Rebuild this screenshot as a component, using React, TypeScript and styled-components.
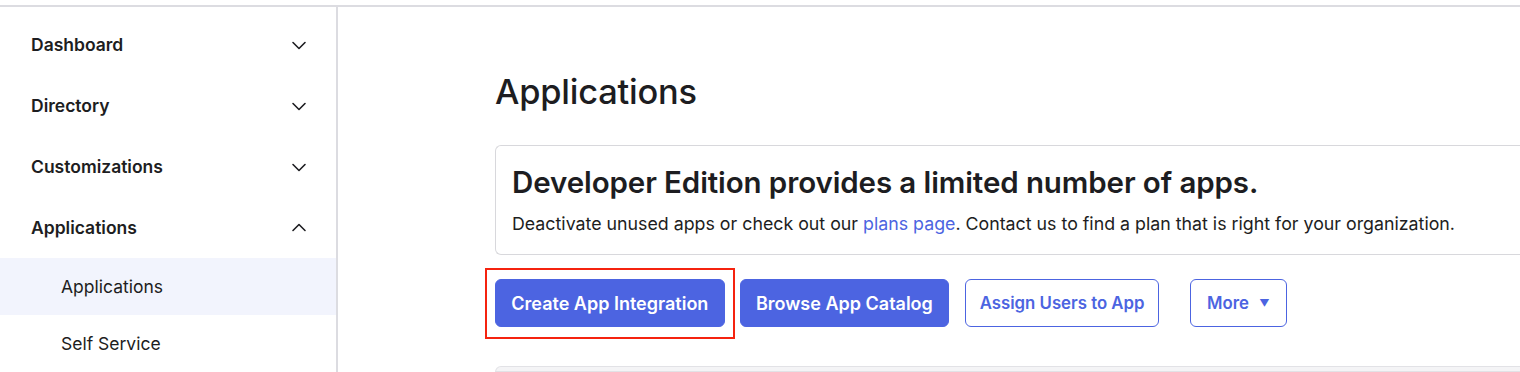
import styled, { createGlobalStyle } from 'styled-components';

const GlobalStyle = createGlobalStyle`
  html, body {
    margin: 0;
    padding: 0;
    background: #ffffff;
  }
  body {
    font-family: Inter, "Noto Sans", "Liberation Sans", sans-serif;
    color: #1d1d21;
    -webkit-font-smoothing: antialiased;
  }
`;

type NavSection = {
  label: string;
  open: boolean;
};

const sections: NavSection[] = [
  { label: 'Dashboard', open: false },
  { label: 'Directory', open: false },
  { label: 'Customizations', open: false },
  { label: 'Applications', open: true },
];

const subItems = [
  { label: 'Applications', active: true },
  { label: 'Self Service', active: false },
];

const Chevron = ({ up }: { up: boolean }) => (
  <svg width="16" height="16" viewBox="0 0 16 16" fill="none">
    <path
      d={up ? 'M2 10.5 L8 4.5 L14 10.5' : 'M2 5.5 L8 11.5 L14 5.5'}
      stroke="#1d1d21"
      strokeWidth="1.6"
      strokeLinecap="round"
      strokeLinejoin="round"
    />
  </svg>
);

const App = () => {
  return (
    <>
      <GlobalStyle />
      <Page>
        <TopBar />
        <Body>
          <Sidebar>
            {sections.map((section) => (
              <SectionRow key={section.label}>
                <SectionLabel>{section.label}</SectionLabel>
                <Chevron up={section.open} />
              </SectionRow>
            ))}
            {subItems.map((item) => (
              <SubItem key={item.label} $active={item.active}>
                {item.label}
              </SubItem>
            ))}
          </Sidebar>
          <Main>
            <Heading>Applications</Heading>
            <Notice>
              <NoticeTitle>Developer Edition provides a limited number of apps.</NoticeTitle>
              <NoticeText>
                Deactivate unused apps or check out our <Link href="#">plans page</Link>. Contact us to
                find a plan that is right for your organization.
              </NoticeText>
            </Notice>
            <ButtonRow>
              <HighlightFrame>
                <Button $primary>Create App Integration</Button>
              </HighlightFrame>
              <Button $primary>Browse App Catalog</Button>
              <Button>Assign Users to App</Button>
              <MoreButton>
                More <Caret>▼</Caret>
              </MoreButton>
            </ButtonRow>
            <NextPanel />
          </Main>
        </Body>
      </Page>
    </>
  );
};

export default App;

const Page = styled.div`
  width: 1520px;
  height: 372px;
  overflow: hidden;
  display: flex;
  flex-direction: column;
`;

const TopBar = styled.div`
  height: 5px;
  flex-shrink: 0;
  border-bottom: 2px solid #dcdce1;
`;

const Body = styled.div`
  display: flex;
  flex: 1;
  min-height: 0;
`;

const Sidebar = styled.nav`
  width: 336px;
  flex-shrink: 0;
  border-right: 2px solid #dcdce1;
  padding-top: 7px;
  display: flex;
  flex-direction: column;
`;

const SectionRow = styled.div`
  height: 61px;
  display: flex;
  align-items: center;
  justify-content: space-between;
  padding: 0 29px 0 31px;
  flex-shrink: 0;
`;

const SectionLabel = styled.span`
  font-size: 17.5px;
  font-weight: 600;
  color: #1d1d21;
`;

const SubItem = styled.div<{ $active: boolean }>`
  height: 57px;
  flex-shrink: 0;
  display: flex;
  align-items: center;
  padding-left: 61px;
  font-size: 17.5px;
  font-weight: 400;
  color: #1d1d21;
  background: ${({ $active }) => ($active ? '#f2f4fd' : 'transparent')};
`;

const Main = styled.main`
  flex: 1;
  min-width: 0;
  padding: 60px 0 0 157px;
  display: flex;
  flex-direction: column;
`;

const Heading = styled.h1`
  margin: 0 0 28px;
  font-size: 34.4px;
  line-height: 50px;
  font-weight: 500;
  color: #1d1d21;
  letter-spacing: -0.2px;
`;

const Notice = styled.section`
  border: 1px solid #d8d8dc;
  border-right: none;
  border-radius: 6px 0 0 6px;
  padding: 18px 16px 16px;
  margin-right: -10px;
`;

const NoticeTitle = styled.h2`
  margin: 0 0 10px;
  font-size: 29.5px;
  line-height: 36px;
  font-weight: 600;
  color: #1d1d21;
  letter-spacing: -0.1px;
`;

const NoticeText = styled.p`
  margin: 0;
  font-size: 17.8px;
  line-height: 28px;
  color: #1d1d21;
`;

const Link = styled.a`
  color: #4c64e1;
  text-decoration: none;
`;

const ButtonRow = styled.div`
  display: flex;
  align-items: center;
  margin-top: 24px;
  gap: 15px;
`;

const HighlightFrame = styled.div`
  display: flex;
  border: 2px solid #f5230f;
  padding: 9px 8px 10px;
  margin: -11px -10px -12px;
`;

const Button = styled.button<{ $primary?: boolean }>`
  height: 48px;
  padding: 0 ${({ $primary }) => ($primary ? '15.3px' : '13.5px')};
  border-radius: 6px;
  font-family: inherit;
  font-size: ${({ $primary }) => ($primary ? '18px' : '16.8px')};
  font-weight: 600;
  cursor: pointer;
  border: 1px solid #4c64e1;
  background: ${({ $primary }) => ($primary ? '#4c64e1' : '#ffffff')};
  color: ${({ $primary }) => ($primary ? '#ffffff' : '#4c64e1')};

  & + & {
    margin-left: 1px;
  }
`;

const MoreButton = styled(Button)`
  padding: 0 16px;
  && {
    margin-left: 16px;
  }
`;

const Caret = styled.span`
  font-size: 10px;
  margin-left: 6px;
  vertical-align: 2px;
`;

const NextPanel = styled.div`
  margin-top: 39px;
  height: 40px;
  border: 1px solid #e2e2e6;
  border-radius: 6px 0 0 0;
  background: #f4f4f6;
  margin-right: -10px;
`;
